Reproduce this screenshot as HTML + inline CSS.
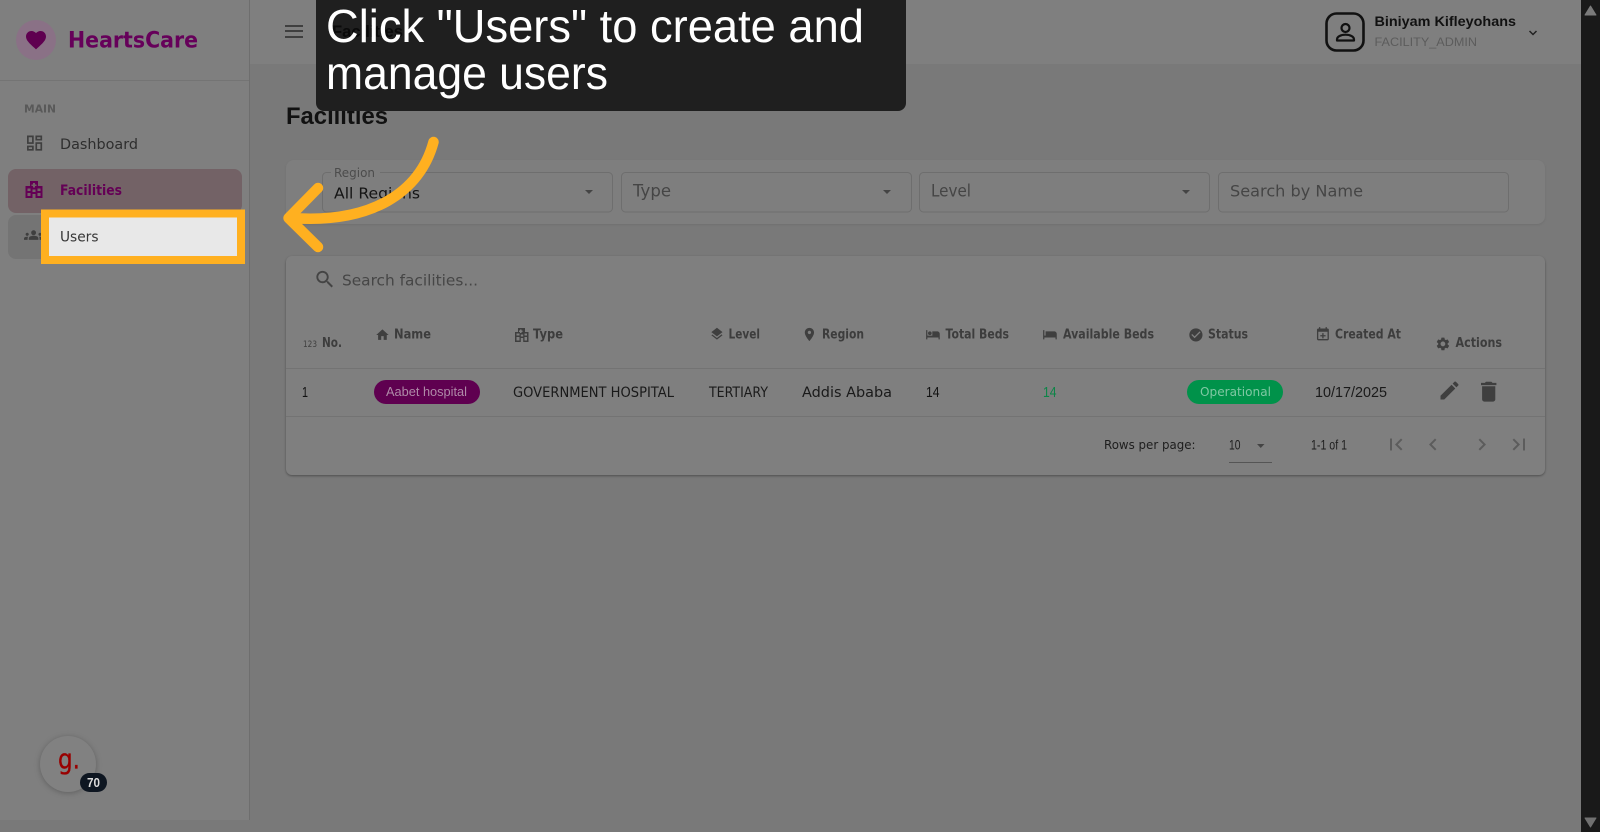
<!DOCTYPE html>
<html lang="en">
<head>
<meta charset="utf-8">
<title>Facilities</title>
<style>
html,body{margin:0;padding:0;width:1600px;height:832px;overflow:hidden;background:#797979}
svg{display:block}
.d{font-family:"DejaVu Sans",sans-serif}
.l{font-family:"Liberation Sans",sans-serif}
.b{font-weight:700}
text{white-space:pre}
</style>
</head>
<body>
<svg xmlns="http://www.w3.org/2000/svg" width="1600" height="832" viewBox="0 0 1600 832">
  <!-- backgrounds -->
  <rect width="1600" height="832" fill="#797979"/>
  <rect x="250" y="0" width="1331" height="64" fill="#7f7f7f"/>
  <rect x="0" y="0" width="250" height="820" fill="#7f7f7f"/>
  <rect x="249" y="0" width="1" height="820" fill="#6e6e6e"/>
  <rect x="0" y="80" width="249" height="1" fill="#747474"/>

  <!-- logo -->
  <circle cx="36" cy="40" r="20" fill="#8a7186"/>
  <path transform="translate(24,28) scale(1)" fill="#5f0050" d="M12 21.35l-1.45-1.32C5.4 15.36 2 12.28 2 8.5 2 5.42 4.42 3 7.5 3c1.74 0 3.41.81 4.5 2.09C13.09 3.81 14.76 3 16.5 3 19.58 3 22 5.42 22 8.5c0 3.78-3.4 6.86-8.55 11.54L12 21.35z"/>
  <text class="d b" x="68" y="47.500" font-size="22" fill="#66005a" textLength="130" lengthAdjust="spacingAndGlyphs">HeartsCare</text>

  <!-- sidebar -->
  <text class="d b" x="24" y="112.500" font-size="10.500" fill="#595959" textLength="32" lengthAdjust="spacingAndGlyphs">MAIN</text>
  <path transform="translate(24.500,133) scale(.84)" fill="#3f3f3f" d="M19 5v2h-4V5h4M9 5v6H5V5h4m10 8v6h-4v-6h4M9 17v2H5v-2h4M21 3h-8v6h8V3zM11 3H3v10h8V3zm10 8h-8v10h8V11zm-10 4H3v6h8v-6z"/>
  <text class="d" x="60" y="149" font-size="14.500" fill="#2e2e2e" textLength="78" lengthAdjust="spacingAndGlyphs">Dashboard</text>

  <rect x="8" y="169" width="234" height="44" rx="8" fill="#736266"/>
  <path fill="#640055" fill-rule="evenodd" d="M30 181h8v5h4.500v12H25.500v-12H30z M33 183v1.500h-1.500v1.500H33v1.500h2V186h1.500v-1.500H35V183z M27.500 188.500v2.500h3v-2.500z M27.500 193v3h3v-3z M32.500 189.500v2.500h3v-2.500z M32.500 194v4h3v-4z M37.500 188.500v2.500h3v-2.500z M37.500 193v3h3v-3z"/>
  <text class="d b" x="60" y="195" font-size="14" fill="#640055" textLength="62" lengthAdjust="spacingAndGlyphs">Facilities</text>

  <rect x="8" y="215" width="234" height="44" rx="8" fill="#747474"/>
  <path transform="translate(24,225.500) scale(.8)" fill="#3f3f3f" d="M12 12.750c1.630 0 3.070.39 4.240.9 1.080.48 1.760 1.560 1.760 2.730V18H6v-1.610c0-1.180.68-2.260 1.760-2.730 1.170-.52 2.610-.91 4.240-.91zM4 13c1.100 0 2-.9 2-2s-.9-2-2-2-2 .9-2 2 .9 2 2 2zm1.130 1.100c-.37-.06-.74-.1-1.130-.1-.99 0-1.930.21-2.780.58C.48 14.900 0 15.620 0 16.430V18h4.500v-1.610c0-.83.23-1.610.63-2.290zM20 13c1.100 0 2-.9 2-2s-.9-2-2-2-2 .9-2 2 .9 2 2 2zm4 3.430c0-.81-.48-1.530-1.220-1.850-.85-.37-1.790-.58-2.780-.58-.39 0-.76.04-1.130.1.4.68.63 1.460.63 2.290V18H24v-1.570zM12 6c1.660 0 3 1.340 3 3s-1.340 3-3 3-3-1.340-3-3 1.340-3 3-3z"/>

  <!-- header -->
  <rect x="285" y="25" width="18" height="2" fill="#3f3f3f"/>
  <rect x="285" y="30" width="18" height="2" fill="#3f3f3f"/>
  <rect x="285" y="36" width="18" height="2" fill="#3f3f3f"/>

  <rect x="1326.500" y="13.500" width="37" height="37" rx="10" fill="none" stroke="#111" stroke-width="2.600"/>
  <circle cx="1345.500" cy="28" r="4" fill="none" stroke="#111" stroke-width="2.200"/>
  <path d="M1337 40.500v-1c0-3 4-4.800 8.500-4.800s8.500 1.800 8.500 4.800v1z" fill="none" stroke="#111" stroke-width="2.200" stroke-linejoin="round"/>
  <text class="l b" x="1374.500" y="26" font-size="14" fill="#111" textLength="141.500" lengthAdjust="spacingAndGlyphs">Biniyam Kifleyohans</text>
  <text class="l" x="1374.500" y="46" font-size="12" fill="#5c5c5c" textLength="102.500" lengthAdjust="spacingAndGlyphs">FACILITY_ADMIN</text>
  <path d="M1529.500 31l3.500 3.500 3.500-3.500" fill="none" stroke="#222" stroke-width="1.500"/>

  <!-- title -->
  <text class="l b" x="286" y="124" font-size="24" fill="#111" textLength="102" lengthAdjust="spacingAndGlyphs">Facilities</text>

  <!-- filter card -->
  <rect x="286" y="160" width="1259" height="64" rx="8" fill="#7e7e7e" style="filter:drop-shadow(0 1px 1px rgba(0,0,0,.08))"/>
  <g fill="none" stroke="#6e6e6e">
    <rect x="322.500" y="172.500" width="290" height="39.500" rx="4"/>
    <rect x="621.500" y="172.500" width="290" height="39.500" rx="4"/>
    <rect x="919.500" y="172.500" width="290" height="39.500" rx="4"/>
    <rect x="1218.500" y="172.500" width="290" height="39.500" rx="4"/>
  </g>
  <rect x="331" y="170" width="49" height="5" fill="#7e7e7e"/>
  <text class="d" x="334" y="177" font-size="12" fill="#4c4c4c" textLength="41" lengthAdjust="spacingAndGlyphs">Region</text>
  <text class="d" x="334" y="198.500" font-size="15.500" fill="#141414" textLength="86" lengthAdjust="spacingAndGlyphs">All Regions</text>
  <text class="d" x="633" y="196.500" font-size="16.500" fill="#454545" textLength="38" lengthAdjust="spacingAndGlyphs">Type</text>
  <text class="d" x="931" y="196.500" font-size="16.500" fill="#454545" textLength="40" lengthAdjust="spacingAndGlyphs">Level</text>
  <text class="d" x="1230" y="196.500" font-size="16" fill="#454545" textLength="133" lengthAdjust="spacingAndGlyphs">Search by Name</text>
  <g fill="#444">
    <path d="M585 190h8l-4 4z"/>
    <path d="M883 190h8l-4 4z"/>
    <path d="M1182 190h8l-4 4z"/>
  </g>

  <!-- table card -->
  <rect x="286" y="256" width="1259" height="219" rx="6" fill="#7f7f7f" style="filter:drop-shadow(0 1px 1px rgba(0,0,0,.35))"/>
  <path transform="translate(313.500,268) scale(.95)" fill="#444" d="M15.500 14h-.79l-.28-.27C15.410 12.590 16 11.110 16 9.500 16 5.910 13.090 3 9.500 3S3 5.910 3 9.500 5.910 16 9.500 16c1.610 0 3.090-.59 4.230-1.570l.27.28v.79l5 4.990L20.490 19l-4.990-5zm-6 0C7.010 14 5 11.990 5 9.500S7.010 5 9.500 5 14 7.010 14 9.500 11.990 14 9.500 14z"/>
  <text class="d" x="342" y="285.500" font-size="15.500" fill="#464646" textLength="136" lengthAdjust="spacingAndGlyphs">Search facilities...</text>

  <rect x="286" y="368" width="1259" height="1" fill="#737373"/>
  <rect x="286" y="416" width="1259" height="1" fill="#737373"/>

  <!-- table headers -->
  <g class="d b" font-size="13" fill="#3d3d3d">
    <text x="322" y="347" textLength="20" lengthAdjust="spacingAndGlyphs">No.</text>
    <text x="394" y="338.500" textLength="37" lengthAdjust="spacingAndGlyphs">Name</text>
    <text x="533" y="338.500" textLength="30" lengthAdjust="spacingAndGlyphs">Type</text>
    <text x="728.500" y="338.500" textLength="31.500" lengthAdjust="spacingAndGlyphs">Level</text>
    <text x="822" y="338.500" textLength="42" lengthAdjust="spacingAndGlyphs">Region</text>
    <text x="945.500" y="338.500" textLength="63.500" lengthAdjust="spacingAndGlyphs">Total Beds</text>
    <text x="1063" y="338.500" textLength="91" lengthAdjust="spacingAndGlyphs">Available Beds</text>
    <text x="1208" y="338.500" textLength="40" lengthAdjust="spacingAndGlyphs">Status</text>
    <text x="1335" y="338.500" textLength="66" lengthAdjust="spacingAndGlyphs">Created At</text>
    <text x="1455.500" y="347" textLength="46.500" lengthAdjust="spacingAndGlyphs">Actions</text>
  </g>
  <text class="d" x="303" y="347" font-size="8.500" fill="#3f3f3f" textLength="14" lengthAdjust="spacingAndGlyphs">123</text>

  <!-- header icons -->
  <g fill="#3f3f3f">
    <path transform="translate(375,327.500) scale(.62)" d="M10 20v-6h4v6h5v-8h3L12 3 2 12h3v8z"/>
    <path fill-rule="evenodd" d="M518 328h7v4h3.500v10H515v-10h3z M520 329.500v1h-1v1.500h1v1h1.500v-1h1v-1.500h-1v-1z M516.500 333.500v2h3v-2z M516.500 337v3.500h3V337z M520.800 334.500v2h2.400v-2z M520.800 338v4h2.400v-4z M524.500 333.500v2h2.500v-2z M524.500 337v3.500h2.500V337z"/>
    <path transform="translate(709.500,326.500) scale(.62)" d="M11.990 18.540l-7.370-5.730L3 14.070l9 7 9-7-1.630-1.270-7.380 5.740zM12 16l7.360-5.730L21 9l-9-7-9 7 1.630 1.270L12 16z"/>
    <path transform="translate(801.500,326.500) scale(.66)" d="M12 2C8.130 2 5 5.130 5 9c0 5.250 7 13 7 13s7-7.750 7-13c0-3.870-3.130-7-7-7zm0 9.500c-1.380 0-2.500-1.120-2.500-2.500s1.120-2.500 2.500-2.500 2.500 1.120 2.500 2.500-1.120 2.500-2.500 2.500z"/>
    <path transform="translate(925.500,327) scale(.62)" d="M7 13c1.660 0 3-1.340 3-3S8.660 7 7 7s-3 1.340-3 3 1.340 3 3 3zm12-6h-8v7H3V5H1v15h2v-3h18v3h2v-9c0-2.210-1.790-4-4-4z"/>
    <path transform="translate(1042.500,327) scale(.62)" d="M3 5H1v15h2v-3h18v3h2v-9c0-2.210-1.790-4-4-4H5v7H3z"/>
    <path transform="translate(1188,327) scale(.66)" d="M12 2C6.480 2 2 6.480 2 12s4.480 10 10 10 10-4.480 10-10S17.520 2 12 2zm-2 15l-5-5 1.410-1.410L10 14.170l7.590-7.590L19 8l-9 9z"/>
    <path transform="translate(1315,326.500) scale(.66)" d="M19 3h-1V1h-2v2H8V1H6v2H5c-1.110 0-2 .9-2 2v14c0 1.100.89 2 2 2h14c1.100 0 2-.9 2-2V5c0-1.100-.9-2-2-2zm0 16H5V8h14zM13 10h-2v3H8v2h3v3h2v-3h3v-2h-3z"/>
    <path transform="translate(1435,336) scale(.66)" d="M19.140 12.940c.04-.3.06-.61.06-.94 0-.32-.02-.64-.07-.94l2.030-1.580c.18-.14.23-.41.12-.61l-1.920-3.320c-.12-.22-.37-.29-.59-.22l-2.390.96c-.5-.38-1.030-.7-1.620-.94l-.36-2.540c-.04-.24-.24-.41-.48-.41h-3.840c-.24 0-.43.17-.47.41l-.36 2.540c-.59.24-1.130.57-1.620.94l-2.390-.96c-.22-.08-.47 0-.59.22L2.740 8.870c-.12.21-.08.47.12.61l2.030 1.580c-.05.3-.09.63-.09.94s.02.64.07.94l-2.030 1.580c-.18.14-.23.41-.12.61l1.920 3.320c.12.22.37.29.59.22l2.390-.96c.5.38 1.030.7 1.620.94l.36 2.540c.05.24.24.41.48.41h3.840c.24 0 .44-.17.47-.41l.36-2.540c.59-.24 1.130-.56 1.620-.94l2.390.96c.22.08.47 0 .59-.22l1.920-3.320c.12-.22.07-.47-.12-.61l-2.010-1.580zM12 15.600c-1.980 0-3.600-1.620-3.600-3.600s1.620-3.600 3.600-3.600 3.600 1.620 3.600 3.600-1.620 3.600-3.600 3.600z"/>
  </g>

  <!-- row -->
  <g class="d" font-size="14" fill="#1a1a1a">
    <text x="513" y="397" textLength="161" lengthAdjust="spacingAndGlyphs">GOVERNMENT HOSPITAL</text>
    <text x="709" y="397" textLength="59" lengthAdjust="spacingAndGlyphs">TERTIARY</text>
    <text x="802" y="397" textLength="90" lengthAdjust="spacingAndGlyphs">Addis Ababa</text>
  </g>
  <g class="l" font-size="15" fill="#111">
    <text x="302" y="397" textLength="6" lengthAdjust="spacingAndGlyphs">1</text>
    <text x="926" y="397" textLength="13.500" lengthAdjust="spacingAndGlyphs">14</text>
    <text x="1043" y="397" textLength="13.500" lengthAdjust="spacingAndGlyphs" fill="#0c8547">14</text>
    <text x="1315" y="397" textLength="72" lengthAdjust="spacingAndGlyphs" fill="#1a1a1a">10/17/2025</text>
  </g>
  <rect x="374" y="380" width="106" height="24" rx="12" fill="#5f0050"/>
  <text class="l" x="386" y="396" font-size="12.500" fill="#af8aa8" textLength="81" lengthAdjust="spacingAndGlyphs">Aabet hospital</text>
  <rect x="1187" y="380" width="96" height="24" rx="12" fill="#00924a"/>
  <text class="d" x="1200" y="396" font-size="12.500" fill="#7fc8a3" textLength="71" lengthAdjust="spacingAndGlyphs">Operational</text>
  <path transform="translate(1437.500,378.500) scale(1)" fill="#3f3f3f" d="M3 17.250V21h3.750L17.810 9.940l-3.750-3.750L3 17.250zM20.710 7.040c.39-.39.39-1.020 0-1.410l-2.340-2.340c-.39-.39-1.020-.39-1.410 0l-1.830 1.830 3.750 3.750 1.830-1.830z"/>
  <path transform="translate(1475.500,378.500) scale(1.100)" fill="#3f3f3f" d="M6 19c0 1.100.9 2 2 2h8c1.100 0 2-.9 2-2V7H6v12zM19 4h-3.500l-1-1h-5l-1 1H5v2h14V4z"/>

  <!-- pagination -->
  <text class="d" x="1104" y="449" font-size="12.500" fill="#1e1e1e" textLength="91.500" lengthAdjust="spacingAndGlyphs">Rows per page:</text>
  <g class="l" font-size="13.500" fill="#1e1e1e">
    <text x="1229" y="449.500" textLength="11.500" lengthAdjust="spacingAndGlyphs">10</text>
    <text x="1311" y="449.500" textLength="36" lengthAdjust="spacingAndGlyphs">1-1 of 1</text>
  </g>
  <path d="M1257 444h7.500l-3.750 4z" fill="#444"/>
  <rect x="1229" y="462" width="43" height="1" fill="#555"/>
  <g fill="#5c5c5c">
    <path transform="translate(1384,432.500)" d="M18.410 16.590L13.820 12l4.590-4.590L17 6l-6 6 6 6zM6 6h2v12H6z"/>
    <path transform="translate(1421,432.500)" d="M15.410 7.410L14 6l-6 6 6 6 1.410-1.410L10.830 12z"/>
    <path transform="translate(1470,432.500)" d="M10 6L8.590 7.410 13.170 12l-4.580 4.590L10 18l6-6z"/>
    <path transform="translate(1507,432.500)" d="M5.590 7.410L10.180 12l-4.590 4.590L7 18l6-6-6-6zM16 6h2v12h-2z"/>
  </g>

  <!-- floating g button -->
  <circle cx="68" cy="764" r="28" fill="#818181" style="filter:drop-shadow(0 1px 3px rgba(0,0,0,.25))"/>
  <text class="d" x="58" y="768.500" font-size="28" fill="#990000" stroke="#990000" stroke-width=".35" textLength="22" lengthAdjust="spacingAndGlyphs">g.</text>
  <rect x="80" y="773" width="27" height="19" rx="9.500" fill="#0e1621"/>
  <text class="l b" x="87" y="787" font-size="12.500" fill="#dcdcdc" textLength="13" lengthAdjust="spacingAndGlyphs">70</text>

  <!-- scrollbar -->
  <rect x="1581" y="0" width="19" height="832" fill="#191919"/>
  <path d="M1585 15h11l-5.500-9z" fill="#7a7a7a" stroke="#7a7a7a" stroke-linejoin="round"/>
  <path d="M1585 818h11l-5.500 9z" fill="#707070" stroke="#707070" stroke-linejoin="round"/>

  <!-- tooltip -->
  <path d="M316 0H906V103a8 8 0 0 1-8 8H324a8 8 0 0 1-8-8z" fill="#1f1f1f"/>
  <text class="l b" x="332" y="37" font-size="17" fill="#0a0a0a" textLength="71" lengthAdjust="spacingAndGlyphs">Facilities</text>
  <text class="l" x="326" y="42" font-size="46" fill="#fff" textLength="538" lengthAdjust="spacingAndGlyphs">Click "Users" to create and</text>
  <text class="l" x="326" y="89" font-size="46" fill="#fff" textLength="282" lengthAdjust="spacingAndGlyphs">manage users</text>

  <!-- Users highlight -->
  <rect x="45" y="213.500" width="196" height="46.500" fill="#e8e8e8" stroke="#ffb020" stroke-width="8"/>
  <text class="d" x="60" y="241.500" font-size="14" fill="#363636" textLength="38.500" lengthAdjust="spacingAndGlyphs">Users</text>

  <!-- arrow -->
  <g fill="none" stroke="#ffb020" stroke-width="10.500" stroke-linecap="round" stroke-linejoin="round">
    <path d="M433.500 142C420 192 372 224 291 218"/>
    <path d="M318 188L288.500 218 318 247"/>
  </g>
</svg>
</body>
</html>
